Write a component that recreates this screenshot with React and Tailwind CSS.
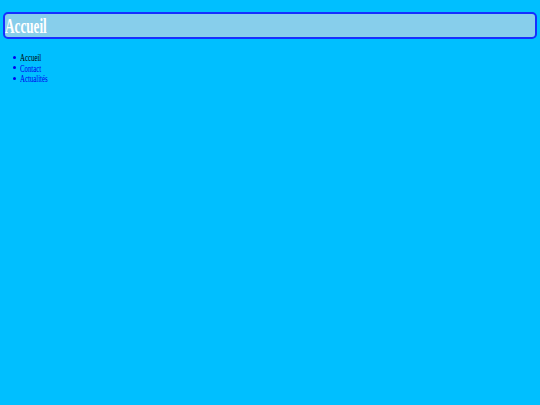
export default function App() {
  const items = [
    { label: "Accueil", color: "text-black" },
    { label: "Contact", color: "text-[#0000ee]" },
    { label: "Actualités", color: "text-[#0000ee]" },
  ];
  return (
    <div className="min-h-screen w-full bg-[#00bfff] px-[3px] pt-[12px]" style={{ fontFamily: '"Liberation Serif", serif' }}>
      <div className="h-[27px] rounded-[5px] border-2 border-[#1530ff] bg-[#87ceeb] flex items-center overflow-hidden">
        <h1 className="m-0 text-[20px] leading-none font-bold text-white origin-left scale-x-[0.66] whitespace-nowrap">Accueil</h1>
      </div>
      <ul className="mt-[13px] pl-[10px] flex flex-col">
        {items.map((it) => (
          <li key={it.label} className="flex items-center h-[10.5px]">
            <span className="w-[3px] h-[3px] rounded-full bg-[#0000ee] mr-[4px]"></span>
            <span className={`text-[11px] leading-[10px] whitespace-nowrap origin-left scale-x-[0.62] ${it.color}`}>{it.label}</span>
          </li>
        ))}
      </ul>
    </div>
  );
}
